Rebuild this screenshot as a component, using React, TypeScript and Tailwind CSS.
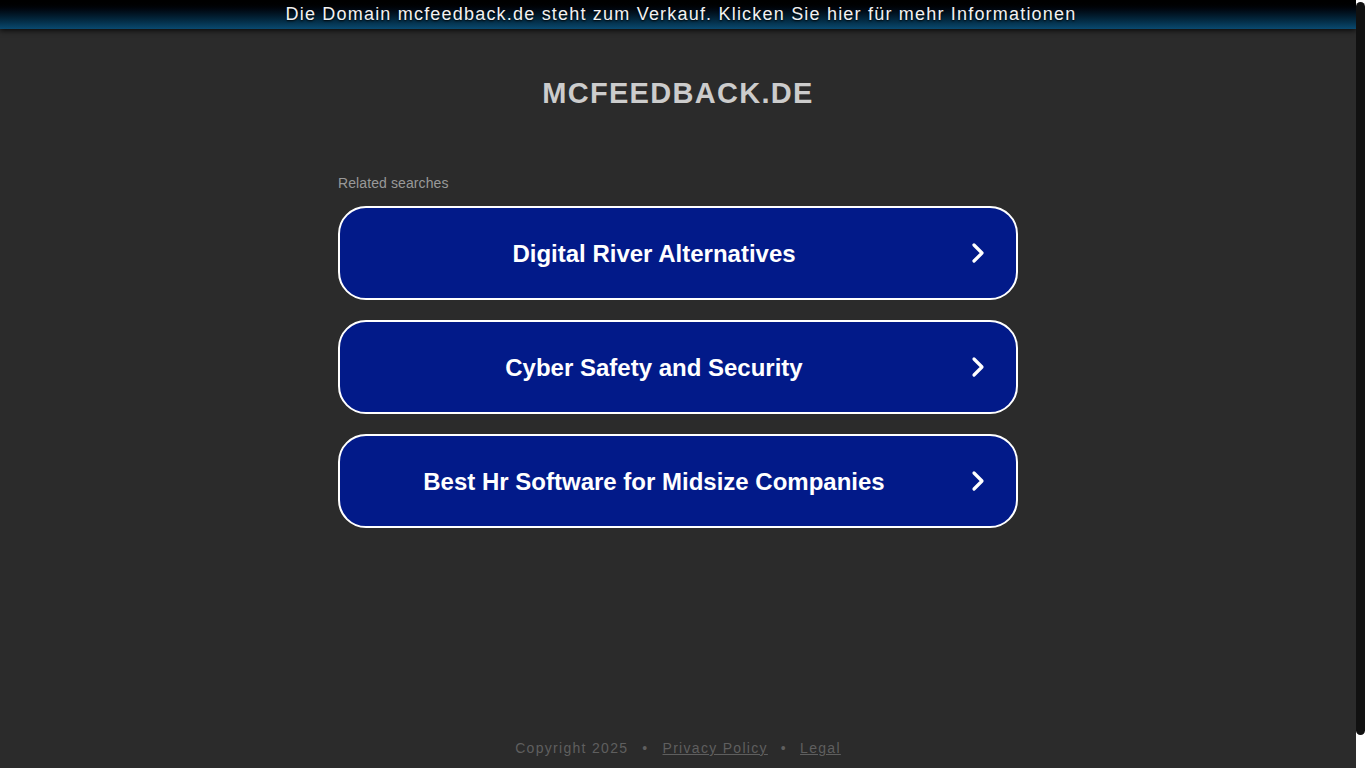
import { ChevronRight } from 'lucide-react';

const SEARCHES = [
  'Digital River Alternatives',
  'Cyber Safety and Security',
  'Best Hr Software for Midsize Companies',
];

export default function App() {
  return (
    <div
      className="h-screen flex bg-[#2b2b2b] overflow-hidden"
      style={{ fontFamily: '"Liberation Sans", Arial, sans-serif' }}
    >
      <div className="flex-1 flex flex-col">
        <div className="h-[29px] bg-gradient-to-b from-[#000000] to-[#0a4a70] shadow-[0_2px_5px_rgba(0,0,0,0.7)] flex items-center justify-center">
          <span className="text-[#f2f2f2] text-[18px] tracking-[1.2px] [text-shadow:0_1px_2px_#000] translate-x-[3px]">
            Die Domain mcfeedback.de steht zum Verkauf. Klicken Sie hier für mehr Informationen
          </span>
        </div>

        <h1 className="mt-[47px] text-center text-[29px] leading-[34px] font-bold tracking-[1.3px] text-[#cccccc]">
          MCFEEDBACK.DE
        </h1>

        <div className="w-[680px] mx-auto mt-[63px]">
          <div className="text-[14px] tracking-[0.1px] text-[#999999] mb-[12px]">Related searches</div>
          <div className="flex flex-col gap-[20px]">
            {SEARCHES.map(s => (
              <div
                key={s}
                className="h-[94px] rounded-[28px] border-2 border-white bg-[#021a89] flex items-center pl-[26px] pr-[22px]"
              >
                <span className="flex-1 pt-[2px] text-center text-white text-[24px] font-bold">{s}</span>
                <ChevronRight className="w-[32px] h-[32px] text-white ml-[20px]" strokeWidth={2.4} />
              </div>
            ))}
          </div>
        </div>

        <div className="mt-auto pb-[9px] text-center text-[14px] tracking-[1.3px] text-[#5f5f5f]">
          Copyright 2025
          <span className="mx-[14px]">•</span>
          <span className="underline">Privacy Policy</span>
          <span className="mx-[13px]">•</span>
          <span className="underline">Legal</span>
        </div>
      </div>

      <div className="w-[10px] bg-white py-[2px] pr-[1px] flex flex-col">
        <div className="h-[733px] rounded-full bg-[#111111]" />
      </div>
    </div>
  );
}
